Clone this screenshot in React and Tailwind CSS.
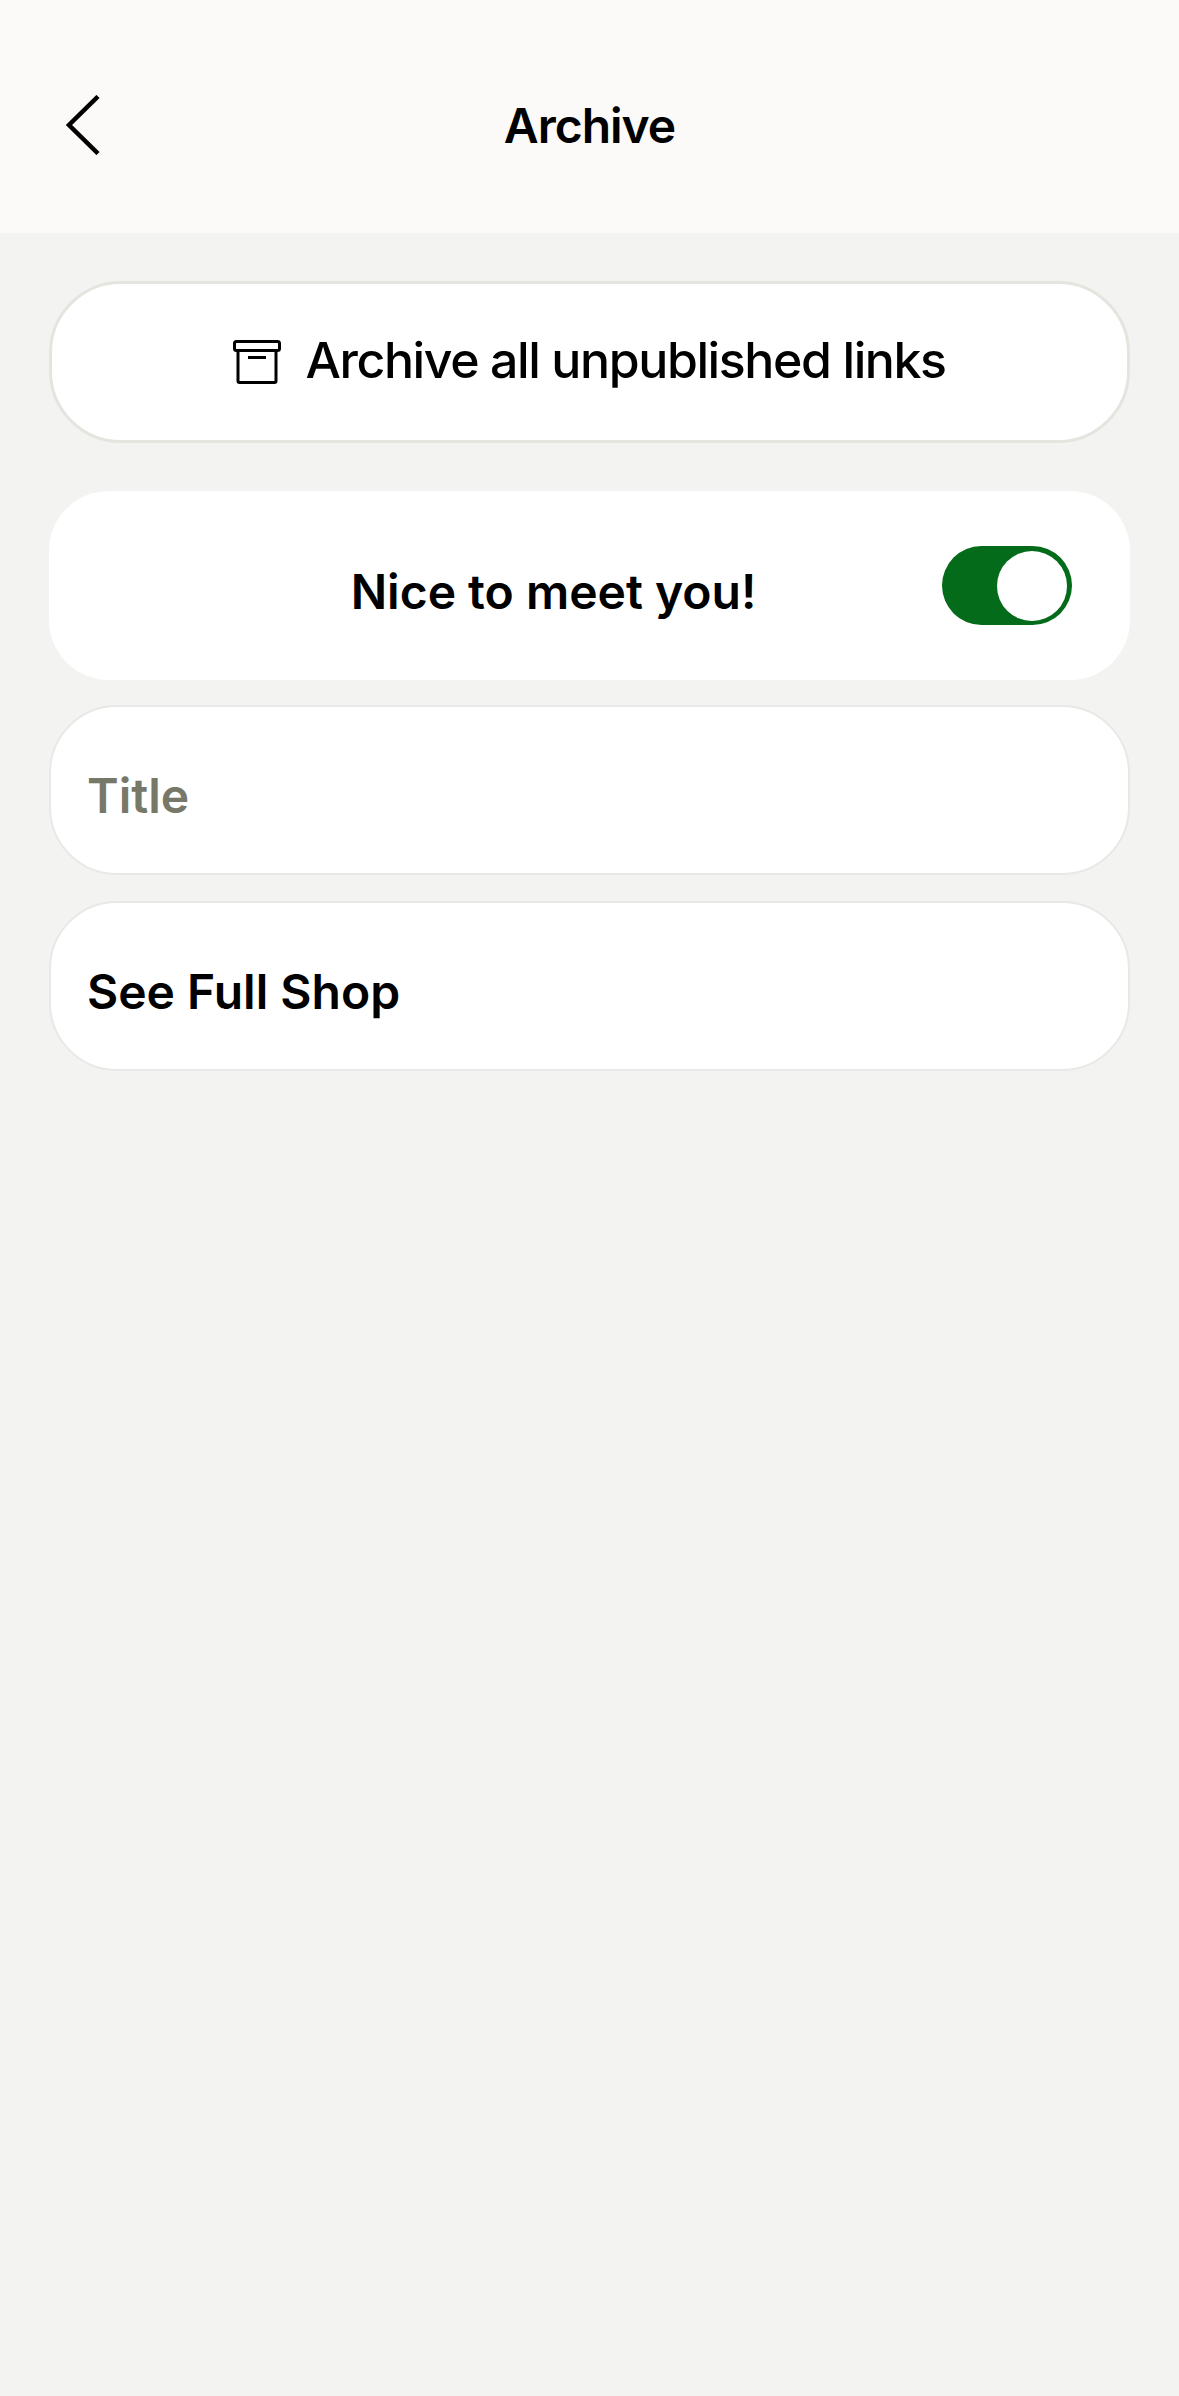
import React from 'react';

function ArchiveIcon() {
  return (
    <svg width="48" height="44" viewBox="0 0 48 44" fill="none" stroke="#000" strokeWidth="3" strokeLinejoin="round">
      <rect x="1.5" y="1.5" width="45" height="9" rx="2" />
      <path d="M5 10.5V41a1.5 1.5 0 0 0 1.5 1.5h35A1.5 1.5 0 0 0 43 41V10.5" />
      <path d="M15 17.5h18" />
    </svg>
  );
}

function Chevron() {
  return (
    <svg width="34" height="60" viewBox="0 0 34 60" fill="none" stroke="#000" strokeWidth="4.5">
      <path d="M32 1.5 3 30l29 28.5" />
    </svg>
  );
}

export default function App() {
  return (
    <div className="min-h-[2396px] bg-[#f3f3f1] font-['Inter',sans-serif] text-black">
      {/* Header */}
      <header className="relative h-[233px] bg-[#fbfaf8] flex items-center justify-center pt-[18px]">
        <button className="absolute left-[66px] top-[95px]">
          <Chevron />
        </button>
        <h1 className="text-[48px] leading-[56px] font-semibold tracking-[-1px]">Archive</h1>
      </header>

      <div className="px-[49px] pt-[48px] flex flex-col">
        {/* Archive button */}
        <button className="h-[162px] rounded-[72px] bg-white border-[3px] border-[#e5e5df] flex items-center justify-center gap-[24px]">
          <ArchiveIcon />
          <span className="pb-[4px] text-[50px] leading-[58px] font-medium tracking-[-1.4px]">Archive all unpublished links</span>
        </button>

        {/* Header link */}
        <div className="mt-[48px] h-[189px] rounded-[60px] bg-white flex items-center pl-[116px] pr-[58px]">
          <p className="flex-1 pt-[12px] text-center text-[48px] leading-[58px] font-semibold">Nice to meet you!</p>
          <div className="shrink-0 w-[130px] h-[79px] rounded-full bg-[#036b1a] flex items-center justify-end pr-[5px]">
            <div className="w-[70px] h-[70px] rounded-full bg-white" />
          </div>
        </div>

        {/* Title */}
        <div className="mt-[25px] h-[170px] rounded-[68px] bg-white border-2 border-[#e8e8e6] flex items-center pl-[36px]">
          <span className="pt-[12px] text-[48px] leading-[58px] font-semibold text-[#777868]">Title</span>
        </div>

        {/* Shop */}
        <div className="mt-[26px] h-[170px] rounded-[68px] bg-white border-2 border-[#e8e8e6] flex items-center pl-[36px]">
          <span className="pt-[12px] text-[48px] leading-[58px] font-semibold">See Full Shop</span>
        </div>
      </div>
    </div>
  );
}
